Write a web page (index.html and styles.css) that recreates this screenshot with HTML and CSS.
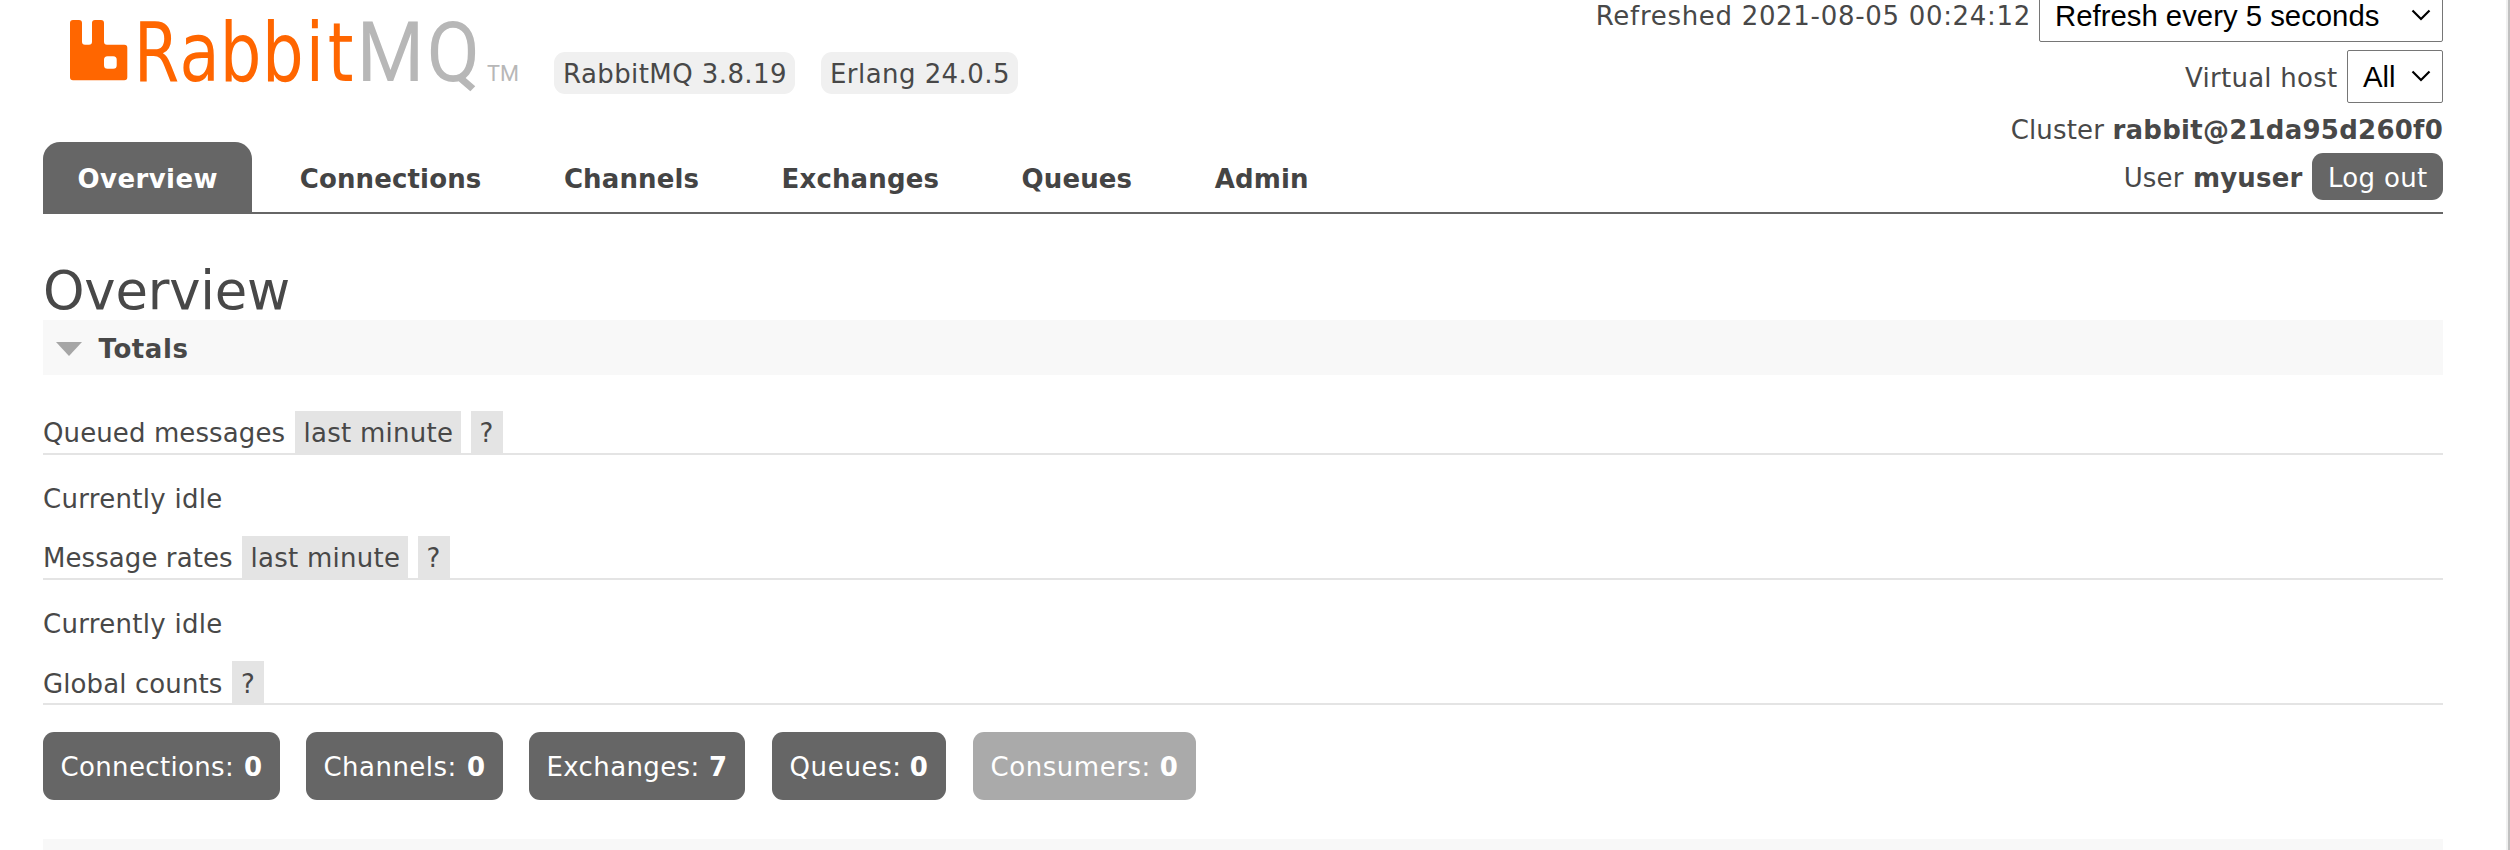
FILE: index.html
```html
<!DOCTYPE html>
<html lang="en">
<head>
<meta charset="utf-8">
<title>RabbitMQ Management</title>
<link rel="stylesheet" href="styles.css">
</head>
<body>
<div class="page">
  <header class="header">
    <div class="brand">
      <div class="brand-row">
        <svg class="logo" width="484" height="100" viewBox="0 0 484 100">
          <path class="orange" fill-rule="evenodd" d="M30 20h6q3 0 3 3v18.700q0 3 3 3h4q3 0 3-3V23q0-3 3-3h6q3 0 3 3v18.700q0 3 3 3h17.300q3 0 3 3v29.600q0 3-3 3H30q-3 0-3-3V23q0-3 3-3zM64.500 56.300q-3.500 0-3.500 3.500v5.400q0 3.500 3.500 3.500h5.700q3.500 0 3.500-3.500v-5.400q0-3.500-3.500-3.500z"/>
          <text class="orange word" transform="translate(0 80.500) scale(.8 1)" x="113.300 170.500 220.900 273.700 328.500 356">Rabbit</text>
          <text class="gray word mq" transform="translate(0 80.500) scale(.92 1)" x="341 417">MQ</text>
          <text class="gray tm" x="444" y="80.500" textLength="32" lengthAdjust="spacingAndGlyphs">TM</text>
        </svg>
        <div class="versions"><span class="version v-rabbit">RabbitMQ 3.8.19</span><span class="version v-erlang">Erlang 24.0.5</span></div>
      </div>
      <nav class="tabs">
        <a class="tab selected">Overview</a><a class="tab">Connections</a><a class="tab">Channels</a><a class="tab">Exchanges</a><a class="tab">Queues</a><a class="tab">Admin</a>
      </nav>
    </div>
    <div class="status">
      <div class="row refresh"><span class="refreshed">Refreshed 2021-08-05 00:24:12</span><div class="select wide"><span>Refresh every 5 seconds</span><svg class="chevron" width="20" height="13" viewBox="0 0 20 13"><path d="M1.500 1.500l8.500 8.500 8.500-8.500"/></svg></div></div>
      <div class="row vhost"><span class="vh">Virtual host</span><div class="select"><span>All</span><svg class="chevron" width="20" height="13" viewBox="0 0 20 13"><path d="M1.500 1.500l8.500 8.500 8.500-8.500"/></svg></div></div>
      <div class="row cluster"><span class="label">Cluster</span><b>rabbit@21da95d260f0</b></div>
      <div class="row user"><span class="label">User</span><b>myuser</b><button class="logout">Log out</button></div>
    </div>
  </header>
  <main>
    <h1>Overview</h1>
    <section>
      <h2 class="bar"><svg class="arrow" width="26" height="16" viewBox="0 0 26 16"><path d="M0 1h26L13 15z"/></svg><span>Totals</span></h2>
      <h3><span class="queued">Queued messages</span><span class="chip range">last minute</span><span class="chip help">?</span></h3>
      <p>Currently idle</p>
      <h3><span class="rates">Message rates</span><span class="chip range">last minute</span><span class="chip help">?</span></h3>
      <p>Currently idle</p>
      <h3 class="last"><span class="global">Global counts</span><span class="chip help">?</span></h3>
      <div class="counts">
        <a class="count c1"><span>Connections:</span><b>0</b></a>
        <a class="count c2"><span>Channels:</span><b>0</b></a>
        <a class="count c3"><span>Exchanges:</span><b>7</b></a>
        <a class="count c4"><span>Queues:</span><b>0</b></a>
        <a class="count c5"><span>Consumers:</span><b>0</b></a>
      </div>
    </section>
    <div class="bar next"></div>
  </main>
</div>
<div class="scroll-edge"></div>
</body>
</html>
```
FILE: styles.css
```css
*{box-sizing:border-box}
body{margin:0;height:850px;overflow:hidden;display:flex;background:#fff;color:#484848;font:26px/30px Verdana,"DejaVu Sans",sans-serif;white-space:nowrap}
.page{flex:1;height:850px;overflow:hidden;padding:0 63px 0 43px}
.scroll-edge{width:4px;background:linear-gradient(90deg,#f0f0f0 50%,#c1c1c1 50%)}

.header{display:flex;justify-content:space-between;height:214px;border-bottom:2px solid #666}
.brand-row{display:flex;height:142px}
.logo{display:block;flex:none;overflow:visible}
.orange{fill:#f60}
.gray{fill:#b7b7b7}
.word{font:82px "DejaVu Sans",sans-serif}
.word.mq{font:84px Roboto,sans-serif}
.tm{font:22px Roboto,sans-serif}
.versions{display:flex;gap:26px;padding:52px 0 0 27px}
.version{height:42px;line-height:44px;padding-left:9px;border-radius:11px;background:#f0f0f0}
.v-rabbit{width:241px;letter-spacing:.416px}
.v-erlang{width:197px;letter-spacing:.444px}

.tabs{display:flex;gap:13px}
.tab{height:70px;padding:4px 34.750px 0;line-height:66px;font-weight:bold;color:#444;letter-spacing:.13px;border-radius:17px 17px 0 0}
.tab.selected{width:209px;padding:4px 0 0 34.500px;background:#666;color:#fff;letter-spacing:.43px}

.status{margin-top:-11px}
.row{display:flex;justify-content:flex-end}
.refresh{height:52px;line-height:54px}
.refreshed{letter-spacing:.695px;margin-right:8px}
.select{display:flex;justify-content:space-between;width:96px;height:53px;padding:0 11px 0 15px;border:1px solid #767676;border-radius:2px;background:#fff;color:#000;font:29.330px/52px Arial,"Liberation Sans",sans-serif}
.select.wide{width:404px}
.chevron{flex:none;margin-top:19px;fill:none;stroke:#000;stroke-width:2.200px}
.vhost{height:53px;margin-top:9px;line-height:56px}
.vh{letter-spacing:.26px;margin-right:9.500px}
.cluster{height:30px;margin-top:12px}
.cluster .label{letter-spacing:.15px;margin-right:8.500px}
.cluster b{letter-spacing:.25px}
.user{height:47px;margin-top:8px;line-height:50px}
.user .label{letter-spacing:.14px;margin-right:9.500px}
.user b{letter-spacing:.17px;margin-right:9.500px}
.logout{width:131px;height:47px;padding:0 0 0 16px;border:0;border-radius:11px;background:#666;color:#fff;font:inherit;letter-spacing:.32px;text-align:left}

h1{height:60px;margin:46px 0 0;font-size:52.800px;font-weight:normal;line-height:62px;letter-spacing:-.2px}
.bar{display:flex;height:55px;margin:0 0 36px;padding-left:13px;background:#f8f8f8;font-size:26px;line-height:58px}
.bar span{letter-spacing:.6px}
.arrow{margin:21px 16.500px 0 0;fill:#a6a6a6}
h3{display:flex;height:44px;margin:0;border-bottom:2px solid #e4e4e4;font-size:26px;font-weight:normal;line-height:44px}
h3.last{line-height:46px}
.chip{height:42px;background:#e4e4e4}
.range{width:166px;padding-left:8.500px;margin-right:9.500px;letter-spacing:.264px}
.help{width:32px;text-align:center}
.queued{width:252px;letter-spacing:.105px}
.rates{width:199px;letter-spacing:.08px}
.global{width:189px;letter-spacing:.1px}
p{height:81px;margin:0;padding-top:29px;letter-spacing:.29px}
.counts{display:flex;margin-top:27px}
.count{display:flex;justify-content:space-between;height:68px;padding:0 17.500px;border-radius:11px;background:#666;color:#fff;line-height:70px;margin-right:26px}
.c1{width:237px;letter-spacing:.35px}
.c2{width:197px;letter-spacing:.46px}
.c3{width:216px;margin-right:27px;letter-spacing:.38px}
.c4{width:174px;margin-right:27px;letter-spacing:.65px}
.c5{width:223px;background:#aaa;letter-spacing:.54px}
.next{margin:39px 0 0}
```
